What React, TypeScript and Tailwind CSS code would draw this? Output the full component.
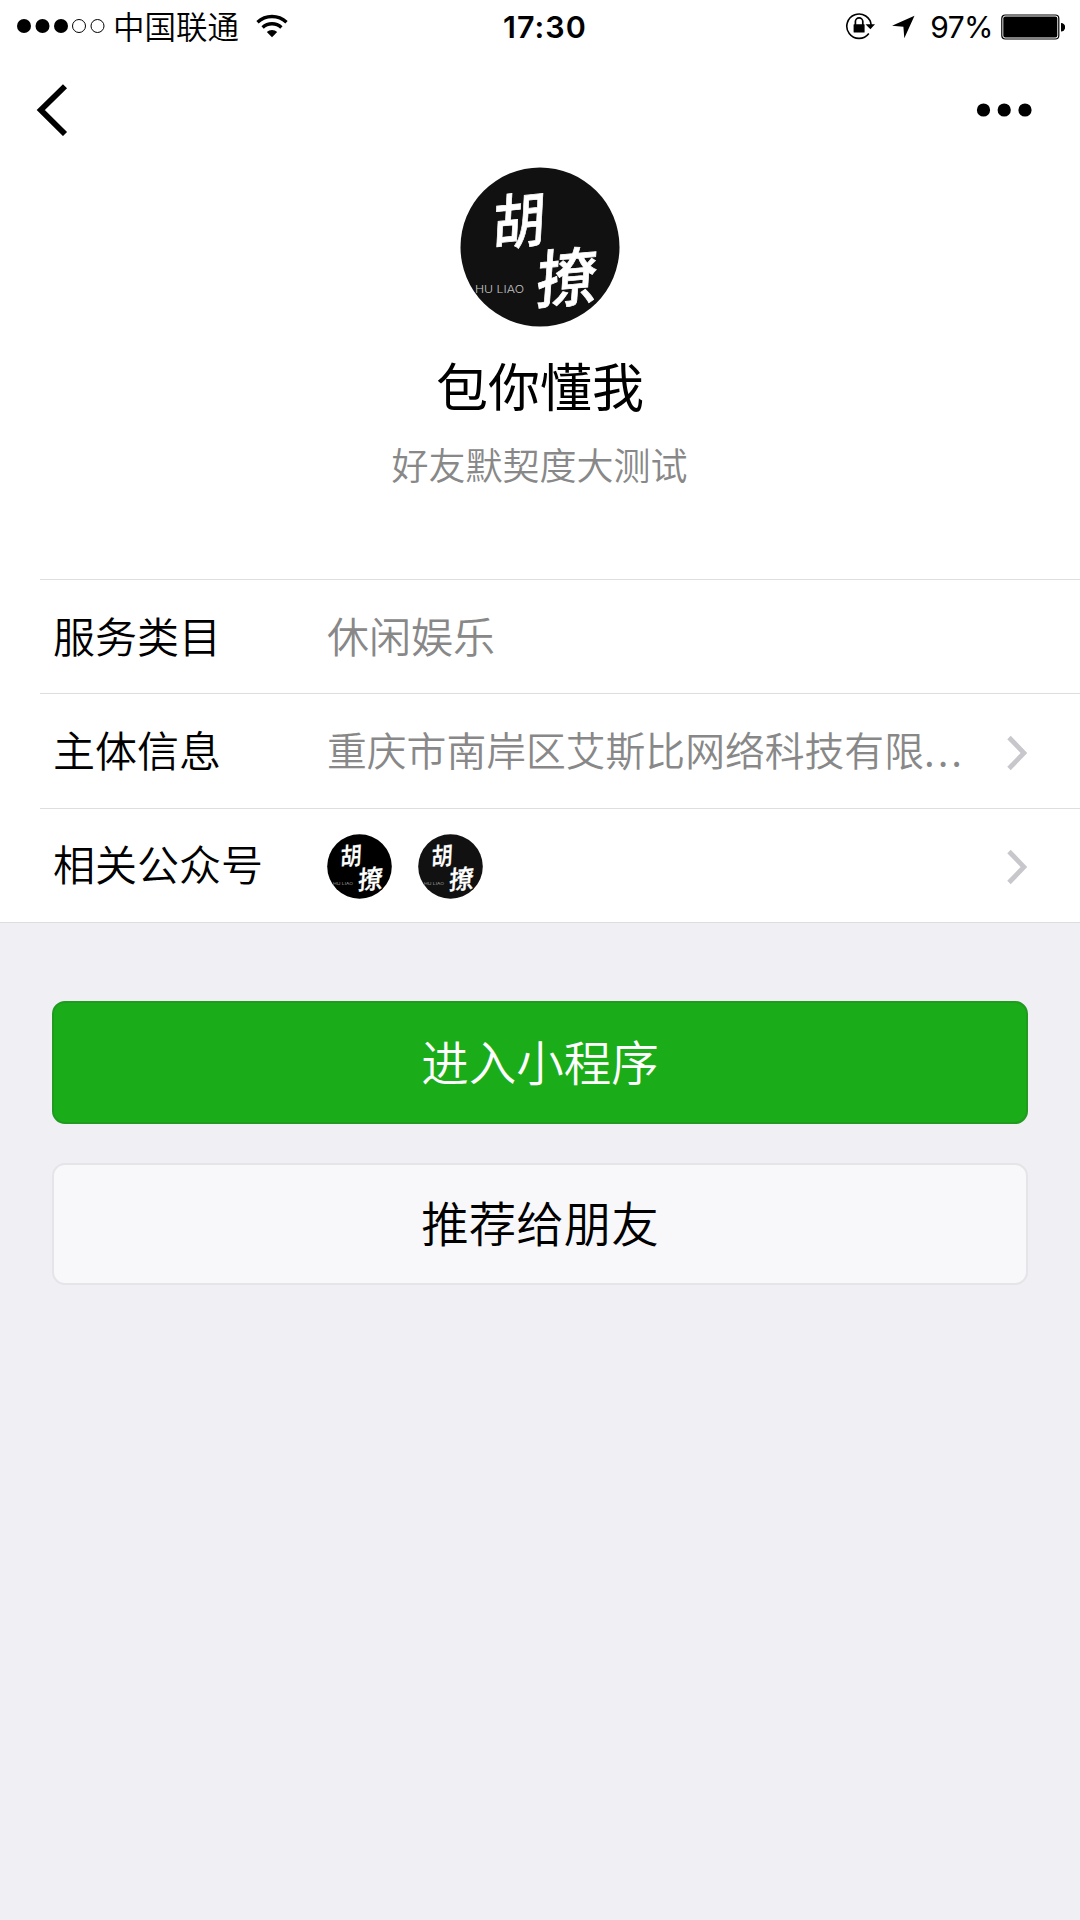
import React from 'react';

const infoRows = [
  { label: '服务类目', value: '休闲娱乐' },
  { label: '主体信息', value: '重庆市南岸区艾斯比网络科技有限', truncated: true, arrow: true },
  { label: '相关公众号', accounts: ['#000000', '#111111'], arrow: true },
];

const Avatar = ({ className, fill = '#111111' }: { className: string; fill?: string }) => (
  <svg viewBox="0 0 160 160" className={className}>
    <circle cx="80" cy="80" r="79.5" fill={fill} />
    <g fill="#ffffff" stroke="#ffffff" strokeWidth="0.7" fontFamily="'Noto Sans CJK SC', sans-serif" fontWeight="500">
      <text transform="translate(32 79) rotate(-6) skewX(-9) scale(0.94 1.06)" fontSize="56">胡</text>
      <text transform="translate(75 137) rotate(-5) skewX(-9) scale(1.02 1.05)" fontSize="60">撩</text>
    </g>
    <text x="15" y="126" fontSize="10" textLength="49" lengthAdjust="spacingAndGlyphs" fill="#c4c4c4" fontFamily="Inter, sans-serif" fontWeight="300">
      HU LIAO
    </text>
  </svg>
);

const ArrowRight = () => (
  <svg viewBox="0 0 20 36" className="w-5 h-9 shrink-0" fill="none" stroke="#c7c7cc" strokeWidth="4.8">
    <path d="M2 2.5 17 18 2 33.5" />
  </svg>
);

const StatusBar = () => (
  <div className="flex h-[52px] items-center justify-between pl-[17px] pr-[14px]">
    {/* Signal, carrier, wifi */}
    <div className="flex w-[400px] items-center">
      <svg viewBox="0 0 88 16" className="h-4 w-[88px]">
        <circle cx="7" cy="8" r="7" />
        <circle cx="25.5" cy="8" r="7" />
        <circle cx="44" cy="8" r="7" />
        <circle cx="62" cy="8" r="6.5" fill="none" stroke="#000" strokeWidth="1" />
        <circle cx="80.5" cy="8" r="6.5" fill="none" stroke="#000" strokeWidth="1" />
      </svg>
      <span className="ml-[8px] font-[350] text-[31.5px] leading-none">中国联通</span>
      <svg viewBox="0 0 32 24" className="ml-[17px] h-6 w-8" fill="none" stroke="#000">
        <path d="M1.5 8.2A21.5 21.5 0 0 1 30.5 8.2" strokeWidth="3.4" />
        <path d="M6.6 13.4A14 14 0 0 1 25.4 13.4" strokeWidth="3.4" />
        <path d="M10.8 18A7.6 7.6 0 0 1 21.2 18L16 23.2Z" fill="#000" stroke="none" />
      </svg>
    </div>

    <span className="pl-[7px] pt-[2px] font-[Inter] text-[30.5px] font-semibold leading-none tracking-[1.1px]">17:30</span>

    {/* Rotation lock, location, battery */}
    <div className="flex w-[400px] items-center justify-end">
      <svg viewBox="0 0 30 28" className="h-7 w-[30px]">
        <path d="M23.8 21.5A12.2 12.2 0 1 1 26.2 13.5" fill="none" stroke="#000" strokeWidth="1.6" />
        <path d="M20.5 12.3H30L25.4 17.2Z" />
        <rect x="8.6" y="12.2" width="11" height="8.4" rx="0.6" />
        <path d="M10.4 13V9.6a3.7 3.7 0 0 1 7.4 0V13" fill="none" stroke="#000" strokeWidth="1.7" />
      </svg>
      <svg viewBox="0 0 24 24" className="ml-[16px] mt-[2px] h-6 w-6">
        <path d="M23.5 0.8 13.3 23.2 12.4 11.8 1 10.8Z" />
      </svg>
      <span className="ml-[15px] pt-[2px] font-[Inter] text-[30px] leading-none tracking-[-0.6px]">97%</span>
      <svg viewBox="0 0 64 26" className="ml-[8px] mr-px mt-px h-[26px] w-16">
        <rect x="0.8" y="1" width="57" height="24" rx="3.5" fill="none" stroke="#000" strokeWidth="1.2" />
        <rect x="2.3" y="2.4" width="54" height="21.2" rx="2" />
        <path d="M60 9a4.2 4.2 0 0 1 0 8.4Z" />
      </svg>
    </div>
  </div>
);

const App = () => {
  return (
    <div className="flex h-[1920px] w-[1080px] flex-col bg-[#efeff4] font-['Noto_Sans_CJK_SC',sans-serif] text-black">
      <header className="h-[579px] bg-white">
        <StatusBar />

        <nav className="flex h-[115px] items-center justify-between pl-[36px] pr-[48px] pt-px">
          <svg viewBox="0 0 32 52" className="h-[52px] w-8" fill="none" stroke="#000" strokeWidth="5.8">
            <path d="M29 2.2 4.8 26 29 50" />
          </svg>
          <svg viewBox="0 0 56 14" className="h-[14px] w-14">
            <circle cx="7.5" cy="7" r="6.6" />
            <circle cx="28.2" cy="7" r="6.6" />
            <circle cx="49" cy="7" r="6.6" />
          </svg>
        </nav>

        <div className="flex flex-col items-center">
          <Avatar className="h-[160px] w-[160px]" />
          <h1 className="mt-[32px] text-[52px] leading-none">包你懂我</h1>
          <p className="mt-[35px] pr-px font-[350] text-[37px] leading-none text-[#888888]">好友默契度大测试</p>
        </div>
      </header>

      <section className="border-b border-[#dcdce1] bg-white">
        {infoRows.map((row) => (
          <div key={row.label} className="ml-[40px] flex h-[114.4px] items-center border-t border-[#dedede] pl-[13px] pr-[53px]">
            <span className="w-[274px] pb-[4px] font-[350] text-[42px] leading-none">{row.label}</span>
            {row.accounts && (
              <div className="flex gap-[26px] pt-[2px]">
                {row.accounts.map((fill) => (
                  <Avatar key={fill} className="h-[65px] w-[65px]" fill={fill} />
                ))}
              </div>
            )}
            {row.value && (
              <span className={`whitespace-nowrap pb-[4px] font-[350] leading-none text-[#888888] ${row.truncated ? 'text-[39.8px]' : 'text-[42px]'}`}>
                {row.value}
                {row.truncated && <span className="tracking-[3px]">...</span>}
              </span>
            )}
            {row.arrow && (
              <div className="ml-auto pt-[3px]">
                <ArrowRight />
              </div>
            )}
          </div>
        ))}
      </section>

      <div className="flex flex-col gap-[39px] px-[52px] pt-[78px]">
        <button className="h-[123px] rounded-[13px] border-2 border-[#219a20] bg-[#1aad19] pb-[4px] font-[350] text-[47.5px] leading-none text-white">
          进入小程序
        </button>
        <button className="h-[122px] rounded-[13px] border-2 border-[#e4e4e9] bg-[#f8f8fa] pb-[4px] font-[350] text-[47.5px] leading-none">
          推荐给朋友
        </button>
      </div>
    </div>
  );
};

export default App;
